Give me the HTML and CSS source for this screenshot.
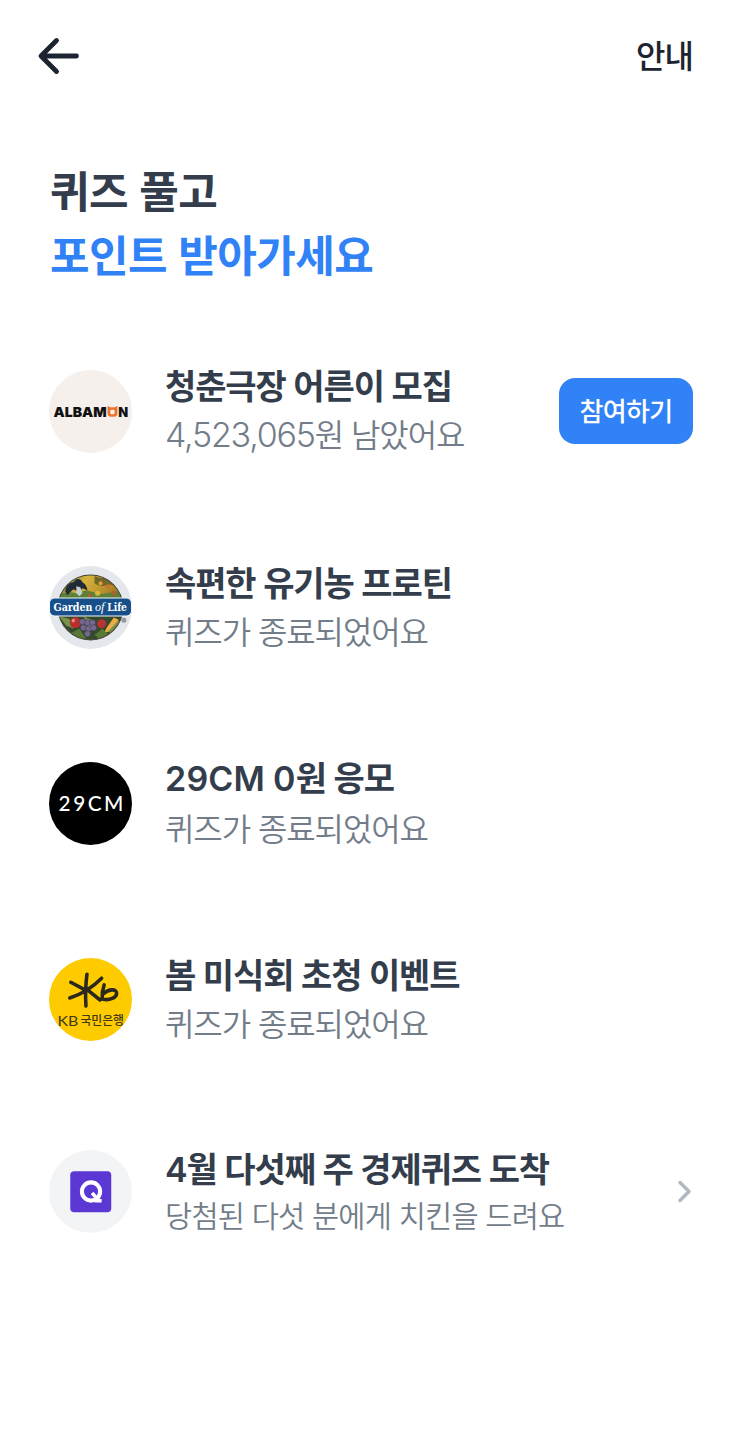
FILE: index.html
```html
<!DOCTYPE html>
<html lang="ko">
<head>
<meta charset="utf-8">
<title>퀴즈</title>
<link rel="stylesheet" href="styles.css">
</head>
<body>
<header class="topbar">
  <svg class="back" width="44" height="40" viewBox="0 0 44 40"><path d="M20.500 4.500 5 20 20.500 35.500M5.500 20H40.500" fill="none" stroke="#1b2430" stroke-width="4.800" stroke-linecap="round" stroke-linejoin="round"/></svg>
  <span class="guide">안내</span>
</header>
<h1 class="headline"><span class="headline-top">퀴즈 풀고</span><span class="headline-accent">포인트 받아가세요</span></h1>
<main class="list">
  <section class="item">
    <svg class="logo" viewBox="0 0 82 82">
      <circle cx="41" cy="41" r="41" fill="#f5f0ec"/>
      <text x="4.500" y="46" class="albamon" textLength="52.500" lengthAdjust="spacingAndGlyphs">ALBAM</text>
      <path d="M57.800 35.500 60.500 36.800h4.400l2.700-1.300v7.200q0 3.500-3.500 3.500h-2.800q-3.500 0-3.500-3.500zM61.800 39.300q-1.200 0-1.200 1.200v1.900q0 1.200 1.200 1.200h1.800q1.200 0 1.200-1.200v-1.900q0-1.200-1.200-1.200z" fill="#ee7427" fill-rule="evenodd"/>
      <text x="68.500" y="46" class="albamon" textLength="9.800" lengthAdjust="spacingAndGlyphs">N</text>
    </svg>
    <div class="copy"><h2 class="title">청춘극장 어른이 모집</h2><p class="sub"><span class="num">4,523,065</span>원 남았어요</p></div>
    <button class="join">참여하기</button>
  </section>
  <section class="item">
    <svg class="logo" viewBox="0 0 82 82">
      <defs>
        <clipPath id="garden"><circle cx="41" cy="41" r="32"/></clipPath>
        <linearGradient id="sky" x1="0" y1="0" x2="1" y2=".3"><stop offset="0" stop-color="#47603d"/><stop offset=".45" stop-color="#d8b43b"/><stop offset="1" stop-color="#a67a24"/></linearGradient>
      </defs>
      <circle cx="41" cy="41" r="41" fill="#e4e7eb"/>
      <g clip-path="url(#garden)">
        <rect x="8" y="8" width="66" height="66" fill="#334a2c"/>
        <rect x="8" y="8" width="66" height="26" fill="url(#sky)"/>
        <path d="M8 30q9-6 19-3l10-3 14 4 23-4v12H8z" fill="#5b8038"/>
        <path d="M16 25q1-8 8-9l3-3q4-1 6 3 4 2 5 8l-5-2-3 4-6-3-6 6z" fill="#202b36"/>
        <path d="m27 20 4 1 2 6-3 3-3-3z" fill="#c5ced0"/>
        <path d="M45 10q5 3 10 1 9 0 14 10-8-4-12-2-7 2-12-2z" fill="#6e662b"/>
        <circle cx="58" cy="20" r="2" fill="#cf6f25"/><circle cx="51" cy="17" r="2" fill="#eb9e2b"/>
        <circle cx="64" cy="27" r="2.500" fill="#a7602f"/><circle cx="48" cy="27" r="2.500" fill="#d8b73d"/><circle cx="40" cy="29" r="2" fill="#b35c30"/>
        <path d="m10 50 10 2 5 10-8-3zM34 50l8 3 4 10-7-4zM56 64l9-12 5 3-8 12z" fill="#789249"/>
        <circle cx="26" cy="56" r="5.500" fill="#b62f2e"/><circle cx="24" cy="54" r="1.800" fill="#e88a72"/>
        <g fill="#75688f" stroke="#453c5b" stroke-width=".5"><circle cx="33" cy="55" r="3"/><circle cx="38" cy="56" r="3"/><circle cx="43" cy="56" r="3"/><circle cx="34" cy="61" r="3"/><circle cx="39" cy="62" r="3"/><circle cx="44" cy="61" r="3"/><circle cx="38" cy="67" r="3"/></g>
        <circle cx="52" cy="57" r="4.500" fill="#b53336"/>
        <path d="m64 51 5 2-11 12-4 2 3-6z" fill="#efac45"/>
        <path d="m22 66 8-4 7 10-9-1zM45 68l8-6 6 6-8 5z" fill="#597a35"/>
      </g>
      <circle cx="41" cy="41" r="32" fill="none" stroke="#4a493b" stroke-width="1"/>
      <rect x=".5" y="31.500" width="81" height="18" rx="5" fill="#174f8b" stroke="#f3f6f8"/>
      <text x="4.500" y="44.300" class="garden" textLength="38.500" lengthAdjust="spacingAndGlyphs">Garden</text>
      <text x="45.500" y="44.300" class="garden-of">of</text>
      <text x="57.500" y="44.300" class="garden" textLength="19.500" lengthAdjust="spacingAndGlyphs">Life</text>
      <circle cx="74" cy="53.500" r="2.500" fill="#969b9f"/>
    </svg>
    <div class="copy"><h2 class="title">속편한 유기농 프로틴</h2><p class="sub">퀴즈가 종료되었어요</p></div>
  </section>
  <section class="item">
    <svg class="logo" viewBox="0 0 82 82"><circle cx="41" cy="41" r="41" fill="#000"/><text x="9.500" y="48" class="cm" textLength="64">29CM</text></svg>
    <div class="copy"><h2 class="title"><span class="num-bold num-wide">29CM 0</span>원 응모</h2><p class="sub">퀴즈가 종료되었어요</p></div>
  </section>
  <section class="item">
    <svg class="logo" viewBox="0 0 82 82">
      <circle cx="41" cy="41" r="41" fill="#fdcb00"/>
      <path d="M37.500 16Q35.500 31 36.500 47.500M21.500 24 36.500 32M52 20Q38 34 20.500 39.500M38 31.500 50.500 41.500M54.500 26.500Q52 34 52.500 40.500C60 42.500 66.800 39 66.800 35 66.800 30 59 30.500 53.500 35.500" fill="none" stroke="#2c291c" stroke-width="3.500" stroke-linecap="round" stroke-linejoin="round"/>
      <text x="8.500" y="67" class="kb" textLength="20.500" lengthAdjust="spacingAndGlyphs">KB</text>
      <text x="31" y="66.500" class="kb-ko" textLength="43" lengthAdjust="spacingAndGlyphs">국민은행</text>
    </svg>
    <div class="copy"><h2 class="title">봄 미식회 초청 이벤트</h2><p class="sub">퀴즈가 종료되었어요</p></div>
  </section>
  <section class="item item-last">
    <svg class="logo" viewBox="0 0 82 82"><circle cx="41" cy="41" r="41" fill="#f2f4f6"/><rect x="21" y="21" width="40.500" height="40.500" rx="4" fill="#5b38d4"/><circle cx="41.500" cy="41" r="9" fill="none" stroke="#fff" stroke-width="4"/><path d="m42.500 42.500 7.500 8M45 50.200h7" fill="none" stroke="#fff" stroke-width="3.500"/></svg>
    <div class="copy"><h2 class="title"><span class="num-bold">4</span>월 다섯째 주 경제퀴즈 도착</h2><p class="sub">당첨된 다섯 분에게 치킨을 드려요</p></div>
    <svg class="chevron" width="18" height="26" viewBox="0 0 18 26"><path d="m5 4.500 9 9-9 9" fill="none" stroke="#b0b8c1" stroke-width="3.500" stroke-linecap="round" stroke-linejoin="round"/></svg>
  </section>
</main>
</body>
</html>
```

FILE: styles.css
```css
* { box-sizing: border-box; }
body { margin: 0; min-height: 1443px; background: #fff; color: #333d4b; font-family: "Noto Sans CJK KR", sans-serif; }
h1, h2, p { margin: 0; white-space: nowrap; }
.topbar { height: 112px; padding: 0 50px 0 36px; display: flex; align-items: center; justify-content: space-between; }
.guide { padding-bottom: 5px; color: #1b2430; font-size: 32px; line-height: 48px; font-weight: 500; letter-spacing: -1px; }
.headline { padding: 45px 0 2px 50px; font-size: 43px; line-height: 64px; font-weight: 700; letter-spacing: -.6px; }
.headline span { display: block; }
.headline-accent { color: #3182f6; }
.list { padding: 26px 50px 0 49px; }
.item { height: 196px; display: flex; align-items: center; }
.item-last { height: 188px; }
.logo { flex: none; width: 83px; height: 83px; margin-right: 33px; }
.copy { flex: 1; padding-bottom: 3px; }
.title { font-size: 34px; line-height: 49px; font-weight: 700; letter-spacing: -1.1px; word-spacing: -.8px; }
.sub { font-size: 32px; line-height: 49px; font-weight: 350; letter-spacing: -1.1px; color: #727d89; }
.num { font-family: Inter, sans-serif; font-size: 34px; font-weight: 300; letter-spacing: -1.2px; }
.num-bold { font-family: Inter, "Noto Sans CJK KR", sans-serif; font-weight: 600; }
.num-wide { letter-spacing: .2px; }
.item-last .copy { padding-bottom: 4px; }
.item-last .sub { font-size: 29.5px; line-height: 41px; letter-spacing: -.75px; }
.join { flex: none; width: 134px; height: 66px; padding: 0 0 4px; border: 0; border-radius: 16px; background: #3182f6; color: #fff; font-family: "Noto Sans CJK KR", sans-serif; font-size: 26px; font-weight: 500; letter-spacing: -.7px; }
.chevron { flex: none; }
.albamon { font-family: Inter, sans-serif; font-weight: 900; font-size: 13.500px; fill: #111; }
.garden { font-family: "DejaVu Serif", serif; font-weight: 700; font-size: 10.500px; fill: #fff; }
.garden-of { font-family: "Liberation Serif", serif; font-style: italic; font-size: 12px; fill: #fff; }
.cm { font-family: Lato, sans-serif; font-weight: 500; font-size: 20.500px; fill: #fff; }
.kb { font-family: Lato, sans-serif; font-size: 14px; fill: #41381a; }
.kb-ko { font-family: "Noto Sans CJK KR", sans-serif; font-weight: 500; font-size: 12px; fill: #41381a; }
```
